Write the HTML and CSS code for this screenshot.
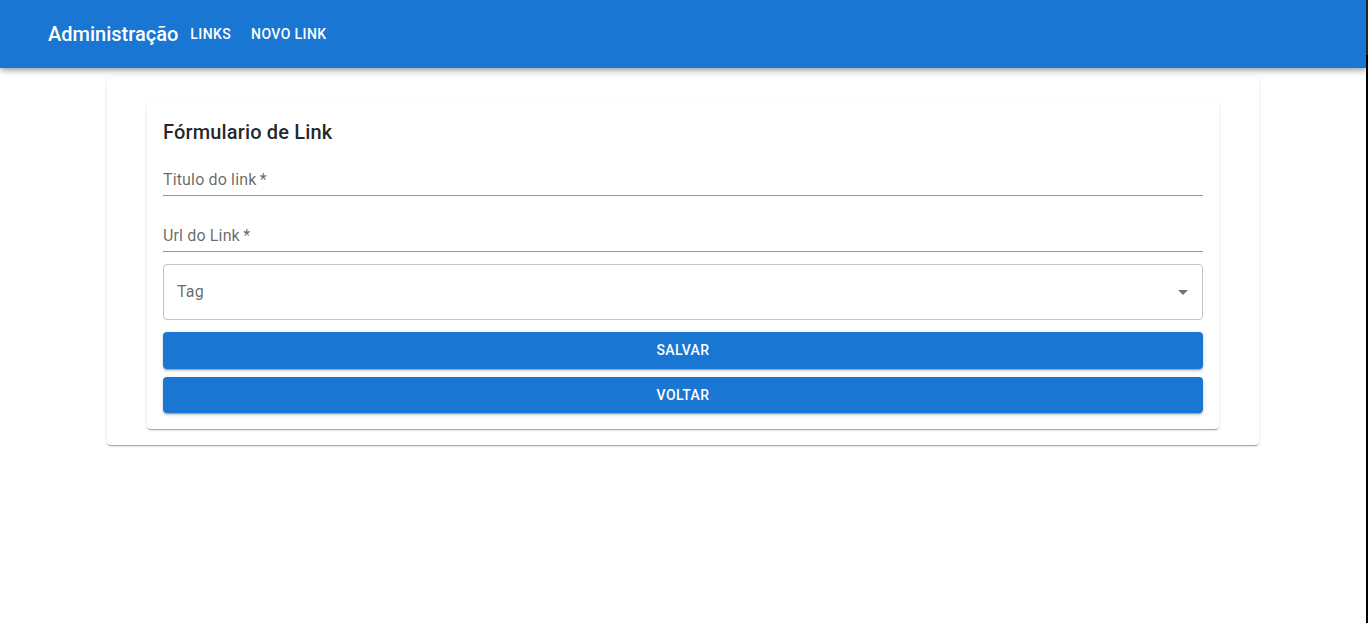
FILE: index.html
```
<!DOCTYPE html>
<html lang="pt">
<head>
<meta charset="utf-8">
<title>Administração</title>
<link rel="stylesheet" href="styles.css">
</head>
<body>
<div class="app">
  <header class="appbar">
    <div class="brand">Administração</div>
    <nav class="nav">
      <a class="nav-btn">Links</a>
      <a class="nav-btn">Novo Link</a>
    </nav>
  </header>
  <main class="container">
    <div class="paper outer">
      <div class="paper inner">
        <h2 class="title">Fórmulario de Link</h2>
        <div class="field first">
          <label class="field-label">Titulo do link<span class="req">&thinsp;*</span></label>
          <div class="field-input"></div>
        </div>
        <div class="field">
          <label class="field-label">Url do Link<span class="req">&thinsp;*</span></label>
          <div class="field-input"></div>
        </div>
        <div class="select">
          <span class="select-label">Tag</span>
          <svg class="select-arrow" width="24" height="24" viewBox="0 0 24 24"><path d="M7 10l5 5 5-5z" fill="rgba(0,0,0,0.54)"/></svg>
        </div>
        <button class="btn save">Salvar</button>
        <button class="btn back">Voltar</button>
      </div>
    </div>
  </main>
</div>
<div class="edge">
  <div class="edge-top"></div>
  <div class="edge-bottom"></div>
</div>
</body>
</html>
```
FILE: styles.css
```
* { box-sizing: border-box; }
html, body { height: 100%; }
body {
  margin: 0;
  display: flex;
  font-family: Roboto, "Noto Sans", "Liberation Sans", sans-serif;
  background: #fff;
  color: rgba(0,0,0,0.87);
  overflow: hidden;
}
.app { flex: 1; min-width: 0; }
.edge { width: 2px; display: flex; flex-direction: column; }
.edge-top { height: 55px; background: #2b2b2b; }
.edge-bottom { flex: 1; background: #000; }

.appbar {
  height: 68px;
  background: #1976d2;
  color: #fff;
  display: flex;
  align-items: center;
  padding-left: 48px;
  box-shadow: 0px 2px 4px -1px rgba(0,0,0,0.2), 0px 4px 5px 0px rgba(0,0,0,0.14), 0px 1px 10px 0px rgba(0,0,0,0.12);
  position: relative;
  z-index: 2;
}
.brand {
  font-size: 20px;
  font-weight: 500;
  letter-spacing: 0;
  line-height: 1.6;
  margin-right: 4px;
}
.nav { display: flex; gap: 4px; }
.nav-btn {
  font-size: 14px;
  font-weight: 500;
  letter-spacing: 0.02857em;
  text-transform: uppercase;
  padding: 6px 8px;
  line-height: 1.75;
  color: #fff;
}

.container {
  width: 1200px;
  margin: 0 auto;
  padding: 8px 24px 0;
}
.paper {
  background: #fff;
  border-radius: 4px;
  box-shadow: 0px 2px 1px -1px rgba(0,0,0,0.2), 0px 1px 1px 0px rgba(0,0,0,0.14), 0px 1px 3px 0px rgba(0,0,0,0.12);
}
.outer { padding: 24px 40px 16px; }
.inner { padding: 16px; display: flex; flex-direction: column; }
.title {
  margin: 0;
  font-size: 20px;
  font-weight: 500;
  line-height: 32px;
  letter-spacing: 0.0075em;
}
.field {
  height: 48px;
  margin-top: 8px;
  position: relative;
  display: flex;
  flex-direction: column;
  justify-content: flex-end;
}
.field.first { margin-top: 0; }
.field-label {
  position: absolute;
  left: 0;
  top: 20px;
  font-size: 16px;
  line-height: 23px;
  letter-spacing: 0.00938em;
  color: rgba(0,0,0,0.6);
}
.field-input {
  height: 32px;
  border-bottom: 1px solid rgba(0,0,0,0.42);
}
.select {
  margin-top: 12px;
  height: 56px;
  border: 1px solid rgba(0,0,0,0.23);
  border-radius: 4px;
  display: flex;
  align-items: center;
  justify-content: space-between;
  padding: 0 7px 1px 13px;
}
.select-label {
  font-size: 16px;
  letter-spacing: 0.00938em;
  color: rgba(0,0,0,0.6);
}
.btn {
  font-family: inherit;
  padding: 6px 16px;
  line-height: 1.75;
  border: 0;
  border-radius: 4px;
  background: #1976d2;
  color: #fff;
  font-size: 14px;
  font-weight: 500;
  letter-spacing: 0.02857em;
  text-transform: uppercase;
  box-shadow: 0px 3px 1px -2px rgba(0,0,0,0.2), 0px 2px 2px 0px rgba(0,0,0,0.14), 0px 1px 5px 0px rgba(0,0,0,0.12);
}
.save { margin-top: 12px; }
.back { margin-top: 8px; }
```
